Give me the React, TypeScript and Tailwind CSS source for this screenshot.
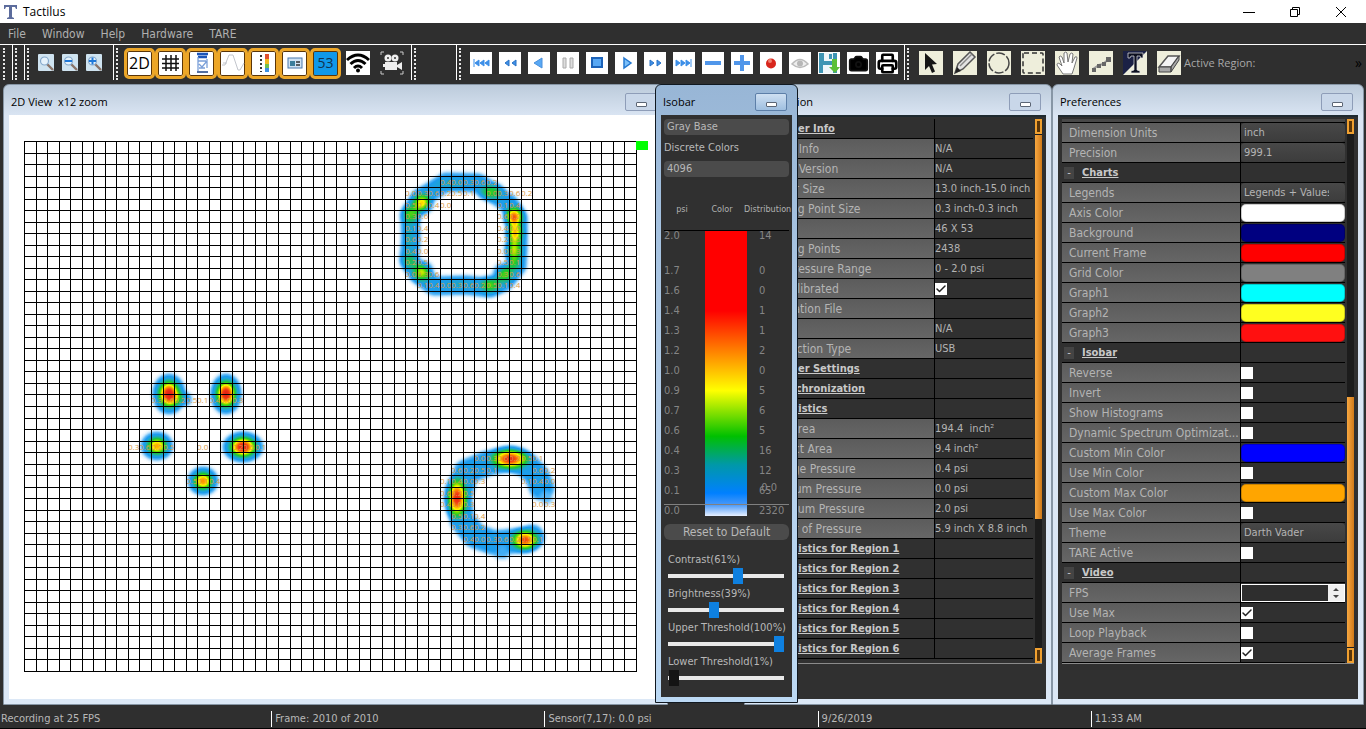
import React, { useState } from "react";
import clsx from "clsx";
import { Camera, Check, Printer } from "lucide-react";

const GRID_COLS = 53;
const GRID_ROWS = 46;
const GRID_W = 612;
const GRID_H = 530;

type InfoRow = { label: string; value?: string; heading?: boolean; checked?: boolean };

const infoRows: InfoRow[] = [
  { label: "Driver Info", heading: true },
  { label: "Driver Info", value: "N/A" },
  { label: "Driver Version", value: "N/A" },
  { label: "Sensor Size", value: "13.0 inch-15.0 inch" },
  { label: "Sensing Point Size", value: "0.3 inch-0.3 inch" },
  { label: "Size", value: "46 X 53" },
  { label: "Sensing Points", value: "2438" },
  { label: "Max Pressure Range", value: "0 - 2.0 psi" },
  { label: "Pre-Calibrated", checked: true },
  { label: "Calibration File" },
  { label: "", value: "N/A" },
  { label: "Connection Type", value: "USB" },
  { label: "Driver Settings", heading: true },
  { label: "Synchronization", heading: true },
  { label: "Statistics", heading: true },
  { label: "Total Area", value: "194.4  inch²" },
  { label: "Contact Area", value: "9.4 inch²" },
  { label: "Average Pressure", value: "0.4 psi" },
  { label: "Minimum Pressure", value: "0.0 psi" },
  { label: "Maximum Pressure", value: "2.0 psi" },
  { label: "Center of Pressure", value: "5.9 inch X 8.8 inch" },
  { label: "Statistics for Region 1", heading: true },
  { label: "Statistics for Region 2", heading: true },
  { label: "Statistics for Region 3", heading: true },
  { label: "Statistics for Region 4", heading: true },
  { label: "Statistics for Region 5", heading: true },
  { label: "Statistics for Region 6", heading: true },
];

type PrefRow = {
  label: string;
  kind: "heading" | "select" | "color" | "check" | "number";
  value?: string;
  checked?: boolean;
};

const prefRows: PrefRow[] = [
  { label: "Dimension Units", kind: "select", value: "inch" },
  { label: "Precision", kind: "select", value: "999.1" },
  { label: "Charts", kind: "heading" },
  { label: "Legends", kind: "select", value: "Legends + Values" },
  { label: "Axis Color", kind: "color", value: "bg-white" },
  { label: "Background", kind: "color", value: "bg-[#000080]" },
  { label: "Current Frame", kind: "color", value: "bg-[#ff0000]" },
  { label: "Grid Color", kind: "color", value: "bg-[#808080]" },
  { label: "Graph1", kind: "color", value: "bg-[#00ffff]" },
  { label: "Graph2", kind: "color", value: "bg-[#ffff20]" },
  { label: "Graph3", kind: "color", value: "bg-[#ff1010]" },
  { label: "Isobar", kind: "heading" },
  { label: "Reverse", kind: "check" },
  { label: "Invert", kind: "check" },
  { label: "Show Histograms", kind: "check" },
  { label: "Dynamic Spectrum Optimizat...", kind: "check" },
  { label: "Custom Min Color", kind: "color", value: "bg-[#0000ff]" },
  { label: "Use Min Color", kind: "check" },
  { label: "Custom Max Color", kind: "color", value: "bg-[#ffa500]" },
  { label: "Use Max Color", kind: "check" },
  { label: "Theme", kind: "select", value: "Darth Vader" },
  { label: "TARE Active", kind: "check" },
  { label: "Video", kind: "heading" },
  { label: "FPS", kind: "number" },
  { label: "Use Max", kind: "check", checked: true },
  { label: "Loop Playback", kind: "check" },
  { label: "Average Frames", kind: "check", checked: true },
];

const levels = [
  ["2.0", "14"],
  ["1.7", "0"],
  ["1.6", "0"],
  ["1.4", "1"],
  ["1.3", "1"],
  ["1.2", "2"],
  ["1.0", "0"],
  ["0.9", "5"],
  ["0.7", "6"],
  ["0.6", "5"],
  ["0.4", "16"],
  ["0.3", "12"],
  ["0.1", "65"],
  ["0.0", "2320"],
];

/* ---------- small controls ---------- */

function TickBox({ label, defaultChecked }: { label: string; defaultChecked?: boolean }) {
  const [on, setOn] = useState(!!defaultChecked);
  return (
    <span className="relative block w-3 h-3 bg-white">
      <input
        type="checkbox"
        aria-label={label}
        checked={on}
        onChange={() => setOn(!on)}
        className="block appearance-none w-3 h-3"
      />
      {on && (
        <Check className="absolute inset-0 w-3 h-3 text-[#222] pointer-events-none" strokeWidth={3} />
      )}
    </span>
  );
}

function MinimizeButton({ active }: { active?: boolean }) {
  return (
    <button
      type="button"
      aria-label="Minimize window"
      className={clsx(
        "w-8 h-[18px] shrink-0 rounded-[2px] border flex items-center justify-center",
        active
          ? "border-[#5d7fa8] bg-gradient-to-b from-[#cfe0f2] to-[#9fbfe0]"
          : "border-[#8e9db8] bg-[#c9d7e9]"
      )}
    >
      <span className="w-[11px] h-[5px] mt-1 rounded-[1px] border border-[#5c6675] bg-white" />
    </button>
  );
}

function SubWindow({
  title,
  active,
  className,
  children,
}: {
  title: string;
  active?: boolean;
  className?: string;
  children: React.ReactNode;
}) {
  return (
    <section
      className={clsx(
        "flex flex-col rounded-t-md border px-[5px] pb-[5px]",
        active
          ? "border-[#101820] bg-gradient-to-b from-[#98b6d6] via-[#b4cfeb] to-[#bcd9f4]"
          : "border-[#8796a5] bg-gradient-to-b from-[#bccbdb] from-0% via-[#dae5f3] via-5% to-[#dce8f6]",
        className
      )}
    >
      <header className="h-[30px] shrink-0 flex items-center justify-between pl-[2px] pr-[5px] pt-1">
        <h2 className="text-[11px] leading-4 text-black whitespace-pre">{title}</h2>
        <MinimizeButton active={active} />
      </header>
      {children}
    </section>
  );
}

function Handle() {
  return (
    <span className="flex h-full gap-[2px] shrink-0">
      <span className="w-px h-[35px] bg-white" />
      <span className="w-0 mt-[3px] h-[32px] border-l-2 border-dotted border-[#e6e6e6]" />
    </span>
  );
}

/* ---------- toolbar ---------- */

function Magnifier({ mark }: { mark?: "minus" | "plus" }) {
  return (
    <svg viewBox="0 0 18 18" className="w-[18px] h-[18px]">
      <rect x="1" width="16" height="17" rx="1" fill="#cfe3f0" />
      <path d="M10 10l6 6" stroke="#8a7468" strokeWidth="2.4" />
      <circle cx="7.5" cy="7" r="4" fill="#e6f2fb" stroke="#86a9cc" strokeWidth="1.2" />
      {mark && <path d="M4 7h7" stroke="#1f78d8" strokeWidth="2" />}
      {mark === "plus" && <path d="M7.5 3.500v7" stroke="#1f78d8" strokeWidth="2" />}
    </svg>
  );
}

const viewIcons: { name: string; text?: string; art?: React.ReactNode }[] = [
  { name: "2D view", text: "2D" },
  {
    name: "Grid",
    art: <path d="M7 4v16M12 4v16M17 4v16M3 8h17M3 12.500h17M3 17h17" stroke="#111" strokeWidth="1.500" fill="none" />,
  },
  {
    name: "Report",
    art: (
      <>
        <path d="M7 3h11M8 6h9" stroke="#1d55b8" strokeWidth="2.500" />
        <path d="M8 6v14M8 10h8M9 13l3 3 5-6M9 17h6M17 8v9" stroke="#7a9fd8" strokeWidth="1.300" fill="none" />
        <path d="M7 21h11" stroke="#1b3f80" strokeWidth="1.500" />
      </>
    ),
  },
  {
    name: "Wave",
    art: <path d="M1 14h3L8 4h4l5 15h2l4-7M2 12h4" stroke="#c2c5cc" fill="none" />,
  },
  {
    name: "Color scale",
    art: (
      <>
        <path d="M9 4v17" stroke="#333" strokeWidth="2" strokeDasharray="2 2" />
        <rect x="13" y="3" width="4" height="5" fill="#e05030" />
        <rect x="13" y="8" width="4" height="5" fill="#f0b820" />
        <rect x="13" y="13" width="4" height="4" fill="#70c050" />
        <rect x="13" y="17" width="4" height="4" fill="#3c90e0" />
      </>
    ),
  },
  {
    name: "Card",
    art: (
      <>
        <rect x="5" y="7" width="14" height="10" fill="#cfe2f4" stroke="#4b78ac" />
        <rect x="7" y="10" width="5" height="5" fill="#3b7d9c" />
        <path d="M13 11h4M13 14h4" stroke="#333" strokeWidth="1.500" />
      </>
    ),
  },
  { name: "Sensor count", text: "53" },
];

const playIcons: { name: string; art: React.ReactNode }[] = [
  { name: "First frame", art: <path d="M4 7v8M9 8l-4 3 4 3zM14 8l-4 3 4 3zM19 8l-4 3 4 3z" fill="#3d8fe8" stroke="#3d8fe8" /> },
  { name: "Rewind", art: <path d="M10 8l-4 3 4 3zM17 8l-4 3 4 3z" fill="#3d8fe8" stroke="#2b72c4" /> },
  { name: "Play backwards", art: <path d="M14 6l-8 5 8 5z" fill="#58a8f4" stroke="#4a90dc" /> },
  { name: "Pause", art: <path d="M6 6h3v10H6zM13 6h3v10h-3z" fill="#ddd" stroke="#aaa" /> },
  { name: "Stop", art: <path d="M6 6h10v9H6z" fill="#58a8f4" stroke="#1c62b8" strokeWidth="2" /> },
  { name: "Play", art: <path d="M9 6l7 5-7 5z" fill="#7cc0fa" stroke="#2478d0" strokeWidth="1.500" /> },
  { name: "Fast forward", art: <path d="M6 8l4 3-4 3zM13 8l4 3-4 3z" fill="#3d8fe8" stroke="#2b72c4" /> },
  { name: "Last frame", art: <path d="M3 8l4 3-4 3zM8 8l4 3-4 3zM13 8l4 3-4 3zM18 7v8" fill="#3d8fe8" stroke="#3d8fe8" /> },
  { name: "Remove", art: <path d="M3 11h16" stroke="#5096ea" strokeWidth="4" /> },
  { name: "Add", art: <path d="M3 11h16M11 3v16" stroke="#5096ea" strokeWidth="4" /> },
  {
    name: "Record",
    art: (
      <>
        <circle cx="11" cy="11.500" r="5" fill="#d8261c" />
        <circle cx="10" cy="9" r="2" fill="#f08070" />
      </>
    ),
  },
  {
    name: "Show",
    art: (
      <>
        <path d="M3 12q8-9 16 0q-8 7-16 0z" fill="#eee" stroke="#bbb" strokeWidth="1.500" />
        <circle cx="11" cy="11.500" r="3" fill="#b8b8b8" />
      </>
    ),
  },
  {
    name: "Save",
    art: (
      <>
        <path d="M1 1h18v20H1z" fill="#3f95b4" />
        <path d="M6 1h9v8H6zM5 13h10v8H5z" fill="#eef6fa" />
        <path d="M11 2h3v5h-3z" fill="#3f95b4" />
        <path d="M14 7h5v8h3l-5 6-6-6h3z" fill="#5cc038" />
      </>
    ),
  },
];

const toolIcons: { name: string; art: React.ReactNode }[] = [
  { name: "Select", art: <path d="M6 2l12 11-5 .500 3 7-3 1.500-3-7-4 4z" fill="#151515" /> },
  {
    name: "Pencil",
    art: (
      <>
        <path d="M2 22l3-9L17 1l5 5L10 18z" fill="#e2e2e2" stroke="#555" strokeWidth="1.500" />
        <path d="M7 15L19 3" stroke="#888" strokeWidth="1.500" />
        <path d="M2 22l2-6 4 4z" fill="#222" />
      </>
    ),
  },
  { name: "Ellipse region", art: <circle cx="12" cy="12" r="10" fill="none" stroke="#444" strokeWidth="1.500" strokeDasharray="9 2" /> },
  { name: "Rectangle region", art: <rect x="2" y="2" width="20" height="20" rx="1" fill="none" stroke="#333" strokeWidth="1.500" strokeDasharray="5 3" /> },
  {
    name: "Pan",
    art: (
      <path
        d="M8 23l-6-9q0-3 3-1l2 2-3-9q1-2 3 0l2 6V2q2-2 3 0l1 9 2-8q2-2 3 0l-1 9 3-6q2-1 2 1l-3 10-2 6z"
        fill="#fff"
        stroke="#777"
      />
    ),
  },
  {
    name: "Polyline",
    art: (
      <>
        <path d="M4 18l6-4 4-1 7-6" stroke="#999" strokeWidth="2" fill="none" />
        <path d="M3 17h4v4H3zM8 13h4v4H8zM13 11h4v4h-4zM17 6h5v5h-5z" fill="#666" />
      </>
    ),
  },
  {
    name: "Text",
    art: (
      <>
        <path d="M0 0h24L0 24z" fill="#1b2145" />
        <path d="M5 2h15v5h-2l-1-2h-3v14l3 1v2H8v-2l3-1V5H8L7 7H5z" fill="#0c0f20" stroke="#e8e8e8" strokeWidth=".7" />
      </>
    ),
  },
  {
    name: "Eraser",
    art: (
      <>
        <path d="M2 16L11 5h11l-8 11z" fill="#f4f4f4" stroke="#555" strokeWidth="1.500" />
        <path d="M2 16h12v5H2zM14 16l8-11v4l-8 12z" fill="#a8a8a8" stroke="#444" />
      </>
    ),
  },
];

function Toolbar() {
  return (
    <div className="h-[37px] shrink-0 border-t border-white bg-[#2f2f2f] flex overflow-hidden">
      <span className="w-0 ml-[3px] mt-[3px] h-[32px] border-l-2 border-dotted border-[#e6e6e6] mr-[7px]" />
      <Handle />
      <span className="w-[7px]" />
      <Handle />
      <div className="flex items-center gap-[6px] ml-2">
        <button type="button" aria-label="Zoom"><Magnifier /></button>
        <button type="button" aria-label="Zoom out"><Magnifier mark="minus" /></button>
        <button type="button" aria-label="Zoom in"><Magnifier mark="plus" /></button>
      </div>
      <span className="w-[10px]" />
      <Handle />
      <div className="flex items-center ml-[6px]">
        {viewIcons.map((icon) => (
          <button
            key={icon.name}
            type="button"
            aria-label={icon.name}
            className={clsx(
              "w-[31px] h-[31px] rounded-[5px] border-[3px] border-[#eca628] shadow-[inset_0_0_0_1px_#5a3508] flex items-center justify-center",
              icon.text === "53" ? "bg-[#1098e8] text-sm text-[#12324e]" : "bg-white text-base text-black"
            )}
          >
            {icon.text ?? <svg viewBox="0 0 24 24" className="w-6 h-6">{icon.art}</svg>}
          </button>
        ))}
      </div>
      <div className="flex items-center gap-[10px] ml-[5px]">
        <button type="button" aria-label="Wireless" className="bg-white">
          <svg viewBox="0 0 24 24" className="w-6 h-6" fill="none" stroke="#000" strokeWidth="3">
            <path d="M1 9q11-10 22 0M4.500 13q7.500-7 15 0M8 17q4-4 8 0" />
            <circle cx="12" cy="19.500" r="2" fill="#000" stroke="none" />
          </svg>
        </button>
        <button type="button" aria-label="Video camera">
          <svg viewBox="0 0 24 24" className="w-6 h-6">
            <path d="M1 4V1h3M20 1h3v3M23 20v3h-3M4 23H1v-3" stroke="#ccc" fill="none" />
            <circle cx="8" cy="7" r="3.500" fill="#eee" />
            <circle cx="15" cy="7" r="3.500" fill="#eee" />
            <path d="M5 11h12v8H5zM17 14l5-3v8l-5-3zM3 13h2v3H3z" fill="#eee" />
            <circle cx="8" cy="7" r="1" fill="#333" />
            <circle cx="15" cy="7" r="1" fill="#333" />
          </svg>
        </button>
      </div>
      <span className="w-[7px]" />
      <Handle />
      <span className="w-10" />
      <Handle />
      <div className="flex items-center gap-[7px] ml-[9px]">
        {playIcons.map((icon) => (
          <button key={icon.name} type="button" aria-label={icon.name} className="bg-white">
            <svg viewBox="0 0 22 22" className="w-[22px] h-[22px]">{icon.art}</svg>
          </button>
        ))}
        <button type="button" aria-label="Snapshot" className="bg-white w-[22px] h-[22px] flex items-center justify-center">
          <Camera className="w-[21px] h-[21px] text-white fill-black stroke-[#111]" strokeWidth={2} />
        </button>
        <button type="button" aria-label="Print" className="bg-white w-[22px] h-[22px] flex items-center justify-center text-black">
          <Printer className="w-[21px] h-[21px]" strokeWidth={3} />
        </button>
      </div>
      <span className="w-[6px]" />
      <Handle />
      <div className="flex items-center gap-[10px] ml-[10px]">
        {toolIcons.map((icon) => (
          <button key={icon.name} type="button" aria-label={icon.name} className="bg-[#eeeedb]">
            <svg viewBox="0 0 24 24" className="w-6 h-6">{icon.art}</svg>
          </button>
        ))}
      </div>
      <span className="self-center ml-[3px] text-[11px] text-[#a8a8a8]">Active Region:</span>
      <button type="button" aria-label="More tools" className="self-center ml-auto mr-1 text-sm text-black">
        »
      </button>
    </div>
  );
}

/* ---------- 2D view ---------- */

// pressure spots: centre, radii and peak strength
const hotSpots = [
  [422, 203, 12, 12, 0.75],
  [411, 214, 11, 12, 0.5],
  [514, 217, 11, 13, 0.95],
  [515, 233, 10, 14, 0.8],
  [514, 250, 10, 15, 0.65],
  [514, 264, 8, 10, 0.4],
  [422, 272, 12, 12, 0.65],
  [410, 261, 10, 11, 0.35],
  [409, 238, 6, 22, 0.2],
  [491, 192, 15, 10, 0.45],
  [504, 274, 12, 12, 0.5],
  [490, 285, 13, 10, 0.5],
  [450, 184, 22, 6, 0.15],
  [460, 284, 22, 6, 0.15],
  [510, 459, 24, 13, 1],
  [457, 498, 13, 25, 1],
  [525, 540, 17, 13, 0.95],
];

const contacts = [
  [169, 394, 16, 20, 1],
  [226, 394, 15, 20, 1],
  [157, 446, 16, 14, 0.82],
  [243, 447, 20, 15, 1],
  [203, 481, 15, 14, 0.85],
];

const ringPath =
  "M446 182L478 183L492 192L509 204L518 218L518 245L517 266L504 282L490 288L466 285L434 286L418 274L409 260L411 238L410 216L420 198L437 188Z";
const arcPath = "M542 488L537 476L527 465L510 459L488 463L466 472L459 498L462 520L475 536L495 543L525 540L532 537";

// cells that print a reading: column, row, how many in a run
const readingRuns = [
  [36, 3, 5], [33, 4, 6], [40, 4, 4], [33, 5, 4], [41, 5, 2], [33, 6, 2], [41, 6, 2], [33, 7, 2], [41, 7, 2],
  [33, 8, 2], [41, 8, 2], [33, 9, 2], [41, 9, 2], [33, 10, 2], [41, 10, 2], [33, 11, 3], [41, 11, 2], [34, 12, 9],
  [11, 22, 8], [9, 26, 4], [15, 26, 1], [18, 26, 3], [14, 29, 3], [39, 27, 6], [37, 28, 4],
  [44, 28, 2], [36, 29, 4], [43, 29, 3], [36, 30, 3], [36, 31, 3], [44, 31, 2], [37, 32, 3], [37, 33, 3], [38, 34, 7],
];

function PressureMap() {
  const xs = Array.from({ length: GRID_COLS + 1 }, (_, i) => Math.round((i * GRID_W) / GRID_COLS));
  const ys = Array.from({ length: GRID_ROWS + 1 }, (_, i) => Math.round((i * GRID_H) / GRID_ROWS));
  return (
    <svg className="block h-full w-full" role="img" aria-label="Pressure map">
      <defs>
        <radialGradient id="spot">
          <stop offset="0" stopColor="#fff" />
          <stop offset="0.3" stopColor="#fff" stopOpacity="0.85" />
          <stop offset="1" stopColor="#fff" stopOpacity="0" />
        </radialGradient>
        <radialGradient id="contact">
          <stop offset="0" stopColor="#fff" />
          <stop offset="0.25" stopColor="#fff" stopOpacity="0.95" />
          <stop offset="0.5" stopColor="#fff" stopOpacity="0.66" />
          <stop offset="0.72" stopColor="#fff" stopOpacity="0.36" />
          <stop offset="0.92" stopColor="#fff" stopOpacity="0.2" />
          <stop offset="1" stopColor="#fff" stopOpacity="0.08" />
        </radialGradient>
        <filter id="spectrum" filterUnits="userSpaceOnUse" x="24" y="141" width="614" height="531" colorInterpolationFilters="sRGB">
          <feGaussianBlur stdDeviation="2" />
          <feComponentTransfer>
            <feFuncR type="table" tableValues="1 0.400 0.110 0.110 0.120 0.100 0.420 1 1 0.950 0.850" />
            <feFuncG type="table" tableValues="1 0.740 0.610 0.640 0.700 0.780 0.860 0.950 0.600 0.220 0.080" />
            <feFuncB type="table" tableValues="1 0.970 0.940 0.840 0.550 0.200 0 0 0 0.080 0.080" />
          </feComponentTransfer>
        </filter>
      </defs>
      <g transform="translate(-9 -115)">
        <g filter="url(#spectrum)">
          <rect x="10" y="128" width="642" height="560" fill="#000" />
          <path d={ringPath} fill="none" stroke="#3a3a3a" strokeWidth="17" strokeLinejoin="round" />
          <path d={arcPath} fill="none" stroke="#383838" strokeWidth="23" strokeLinejoin="round" strokeLinecap="round" />
          <path d="M543 492l6 11" stroke="#1c1c1c" strokeWidth="10" />
          <path d="M502 545v13" stroke="#262626" strokeWidth="11" />
          <path d="M174 399h11" stroke="#383838" strokeWidth="12" strokeLinecap="round" />
          {contacts.map(([cx, cy, rx, ry, peak]) => (
            <ellipse key={`${cx}-${cy}`} cx={cx} cy={cy} rx={rx} ry={ry} fill="url(#contact)" opacity={peak} />
          ))}
          {hotSpots.map(([cx, cy, rx, ry, peak]) => (
            <ellipse key={`${cx}-${cy}`} cx={cx} cy={cy} rx={rx} ry={ry} fill="url(#spot)" opacity={peak} />
          ))}
        </g>
        <g fill="#d99a48" fontSize="8">
          {readingRuns.map(([col, row, n]) =>
            Array.from({ length: n }, (_, i) => (
              <text key={`${col + i}-${row}`} x={24 + xs[col + i]} y={150 + ys[row]}>
                {`0.${((col + i) * 3 + row * 5) % 7}`}
              </text>
            ))
          )}
        </g>
        <g stroke="#000" shapeRendering="crispEdges">
          {xs.map((x) => (
            <line key={x} x1={x + 24.5} x2={x + 24.5} y1={141} y2={672} />
          ))}
          {ys.map((y) => (
            <line key={y} x1={24} x2={637} y1={y + 141.5} y2={y + 141.5} />
          ))}
        </g>
        <rect x="636" y="141" width="12" height="9" fill="#00ff00" />
      </g>
    </svg>
  );
}

/* ---------- property tables ---------- */

function ScrollTrack({ low }: { low?: boolean }) {
  return (
    <div className="w-[7px] shrink-0 flex flex-col bg-[#1c1c1c]">
      <span className="h-[15px] shrink-0 border-2 border-[#f0a030] bg-[#5a3508]" />
      <span className={clsx("bg-gradient-to-r from-[#f8a840] to-[#d07a18]", low ? "mt-[263px] flex-1" : "mt-px h-[384px]")} />
      <span className={clsx("h-[15px] shrink-0 border-2 border-[#f0a030] bg-[#5a3508]", low ? "mt-px" : "mt-auto")} />
    </div>
  );
}

const table =
  "w-full table-fixed border-separate border-spacing-0 text-[11px] leading-4 text-[#b4b4b4] font-['DejaVu_Sans_Condensed',sans-serif]";
const labelCell = "h-5 p-0 border-b border-black border-r text-left font-normal";

function InformationTable() {
  return (
    <table className={table}>
      <colgroup>
        <col />
        <col className="w-[98px]" />
      </colgroup>
      <tbody>
        {infoRows.map((row, i) => (
          <tr key={i}>
            <th
              scope="row"
              className={clsx(
                labelCell,
                row.heading ? "pl-[25px] bg-[#303030] text-[#c8c8c8]" : "pl-3 bg-gradient-to-b from-[#5c5c5c] to-[#666]"
              )}
            >
              <span className={clsx("block truncate", row.heading ? "underline font-bold" : "text-xs leading-4")}>
                {row.label}
              </span>
            </th>
            <td className="h-5 p-0 border-b border-black bg-[#303030] whitespace-pre">
              {row.checked ? <TickBox label={row.label} defaultChecked /> : row.value}
            </td>
          </tr>
        ))}
      </tbody>
    </table>
  );
}

function PrefControl({ row }: { row: PrefRow }) {
  switch (row.kind) {
    case "select":
      return (
        <select
          aria-label={row.label}
          className="block appearance-none w-full h-[19px] pl-[3px] pr-4 rounded-[4px] bg-gradient-to-b from-[#484848] to-[#3c3c3c]"
        >
          <option>{row.value}</option>
        </select>
      );
    case "color":
      return <button type="button" aria-label={row.label} className={clsx("block w-full h-[18px] rounded-[5px] border border-black/20", row.value)} />;
    case "check":
      return <TickBox label={row.label} defaultChecked={row.checked} />;
    case "number":
      return (
        <span className="flex h-[18px] border border-white">
          <input type="text" aria-label={row.label} className="min-w-0 flex-1 bg-[#2e2e2e]" />
          <svg viewBox="0 0 16 16" className="w-4 h-4 bg-[#f0f0f0]">
            <path d="M8 3l3 3H5zM5 10h6l-3 3z" fill="#444" />
          </svg>
        </span>
      );
    default:
      return null;
  }
}

function PreferencesTable() {
  return (
    <table className={table}>
      <colgroup>
        <col />
        <col className="w-[104px]" />
      </colgroup>
      <tbody>
        {prefRows.map((row) => (
          <tr key={row.label}>
            <th
              scope="row"
              className={clsx(
                labelCell,
                row.kind === "heading" ? "pl-[2px] bg-[#303030]" : "pl-[7px] bg-gradient-to-b from-[#5c5c5c] to-[#666]"
              )}
            >
              {row.kind === "heading" ? (
                <span className="flex items-center gap-2 text-[#c8c8c8]">
                  <button type="button" aria-label={`Collapse ${row.label}`} className="w-[10px] h-3 bg-[#444] leading-3">
                    -
                  </button>
                  <span className="font-bold underline">{row.label}</span>
                </span>
              ) : (
                <span className="block whitespace-nowrap text-xs leading-4">{row.label}</span>
              )}
            </th>
            <td className="h-5 p-0 border-b border-black bg-[#303030]">
              <PrefControl row={row} />
            </td>
          </tr>
        ))}
      </tbody>
    </table>
  );
}

/* ---------- isobar ---------- */

function IsobarSlider({ name, value, dark }: { name: string; value: number; dark?: boolean }) {
  const [pct, setPct] = useState(value);
  return (
    <label className="block h-[34px] text-[11px] leading-4 text-[#b8b8b8] whitespace-nowrap">
      {name}({pct}%)
      <input
        type="range"
        value={pct}
        onChange={(e) => setPct(Number(e.target.value))}
        className={clsx(
          "block w-full h-4 appearance-none bg-transparent [&::-webkit-slider-runnable-track]:h-1 [&::-webkit-slider-runnable-track]:bg-[#e8e8e8] [&::-webkit-slider-thumb]:appearance-none [&::-webkit-slider-thumb]:-mt-[6px] [&::-webkit-slider-thumb]:h-4 [&::-webkit-slider-thumb]:w-[10px]",
          dark ? "[&::-webkit-slider-thumb]:bg-[#141414]" : "[&::-webkit-slider-thumb]:bg-[#0e80e0]"
        )}
      />
    </label>
  );
}

function IsobarWindow() {
  const select =
    "block appearance-none w-full h-4 px-[3px] rounded-[4px] bg-[#4b4b4b] text-[11px] leading-4 text-[#b8b8b8]";
  return (
    <SubWindow title="Isobar" active className="absolute left-[655px] top-[3px] bottom-[2px] w-[143px]">
      <div className="flex-1 min-h-0 bg-[#303030] px-[3px] pt-1 font-['DejaVu_Sans_Condensed',sans-serif]">
        <select aria-label="Color base" className={select}>
          <option>Gray Base</option>
        </select>
        <label className="block text-[11px] leading-[26px] text-[#b8b8b8]">
          Discrete Colors
          <select className={select}>
            <option>4096</option>
          </select>
        </label>
        <div className="mt-6 h-[29px] grid grid-cols-[36px_44px_1fr] text-[9px] leading-4 text-[#b0b0b0] text-center whitespace-nowrap">
          <span>psi</span>
          <span>Color</span>
          <span>Distribution</span>
        </div>
        <div className="relative h-[286px] flex border-t border-black text-[11px] leading-4 text-[#858585]">
          <div className="w-[41px]">
            {levels.map(([psi]) => (
              <div key={psi} className="h-5 first:h-[31px] first:-mt-[3px] first:mb-1">{psi}</div>
            ))}
          </div>
          <div className="w-[42px] bg-[linear-gradient(to_bottom,#ff0000_0%,#ff0000_28%,#ff8000_42%,#ffff00_56%,#00c000_72%,#0098a8_82%,#0080ff_92%,#4898f8_96%,#e8f0ff_100%)]" />
          <div className="pl-3">
            {levels.map(([psi, count]) => (
              <div key={psi} className="h-5 first:h-[31px] first:-mt-[3px] first:mb-1">{count}</div>
            ))}
          </div>
          <span className="absolute right-3 bottom-5">0.0</span>
          <span className="absolute inset-x-0 bottom-[11px] h-px bg-[#808080]" />
        </div>
        <button type="button" className="mt-2 block w-full h-4 rounded-[6px] bg-[#4b4b4b] text-xs leading-4 text-[#b8b8b8]">
          Reset to Default
        </button>
        <div className="mt-3 pl-1 pr-[5px]">
          <IsobarSlider name="Contrast" value={61} />
          <IsobarSlider name="Brightness" value={39} />
          <IsobarSlider name="Upper Threshold" value={100} />
          <IsobarSlider name="Lower Threshold" value={1} dark />
        </div>
      </div>
    </SubWindow>
  );
}

export default function App() {
  const status = ["Recording at 25 FPS", "Frame: 2010 of 2010", "Sensor(7,17): 0.0 psi", "9/26/2019", "11:33 AM"];

  return (
    <div className="h-screen flex flex-col bg-[#2f2f2f] overflow-hidden font-['Open_Sans',sans-serif]">
      {/* Title bar */}
      <header className="h-[23px] shrink-0 bg-white flex items-center pl-[3px] text-[11px] text-black">
        <svg viewBox="0 0 16 16" className="w-4 h-4 mr-1">
          <path d="M1 1h13v4h-1l-1-2H9v10l2 1v1H4v-1l2-1V3H3L2 5H1z" fill="#5c6c9c" />
        </svg>
        <h1 className="text-xs">Tactilus</h1>
        <div className="ml-auto flex items-center mr-[19px] gap-[34px]">
          <button type="button" aria-label="Minimize">
            <svg viewBox="0 0 12 12" className="w-3 h-3"><path d="M0 6.500h12" stroke="#000" /></svg>
          </button>
          <button type="button" aria-label="Restore">
            <svg viewBox="0 0 12 12" className="w-3 h-3" fill="none" stroke="#000">
              <path d="M1.500 3.500h7v7h-7zM3.500 3.500v-2h7v7h-2" />
            </svg>
          </button>
          <button type="button" aria-label="Close">
            <svg viewBox="0 0 12 12" className="w-3 h-3"><path d="M1 1l10 10M11 1L1 11" stroke="#000" /></svg>
          </button>
        </div>
      </header>

      {/* Menu */}
      <nav className="h-[21px] shrink-0 flex items-center gap-4 pl-2 text-xs text-[#b0b0b0] font-['DejaVu_Sans_Condensed',sans-serif]">
        {["File", "Window", "Help", "Hardware", "TARE"].map((item) => (
          <button key={item} type="button">{item}</button>
        ))}
      </nav>

      <Toolbar />

      {/* Windows */}
      <main className="relative flex-1 min-h-0 flex pt-[3px] pl-[3px] pr-[2px]">
        <SubWindow title="2D View  x12 zoom" className="flex-1 min-w-0 mr-[76px]">
          <div className="flex-1 min-h-0 bg-white overflow-hidden">
            <PressureMap />
          </div>
        </SubWindow>

        <SubWindow title="Information" className="w-[308px]">
          <div className="flex-1 min-h-0 bg-[#303030] border-t-2 border-[#1f2a30] flex flex-col pb-[35px] pt-[2px] pr-1">
            <div className="flex-1 min-h-0 flex border-b border-[#8a8a8a] overflow-hidden">
              <div className="flex-1 min-w-0 overflow-hidden mr-[2px]">
                <InformationTable />
              </div>
              <ScrollTrack />
            </div>
          </div>
        </SubWindow>

        <SubWindow title="Preferences" className="w-[312px]">
          <div className="flex-1 min-h-0 bg-[#303030] border-t-2 border-[#1f2a30] flex flex-col pb-[35px] pt-[2px] px-1">
            <div className="flex-1 min-h-0 flex border-b border-[#8a8a8a] overflow-hidden">
              <div className="flex-1 min-w-0 overflow-hidden mr-[2px]">
                <div className="h-1 border-b border-black bg-[#484848]" />
                <PreferencesTable />
              </div>
              <ScrollTrack low />
            </div>
          </div>
        </SubWindow>

        <IsobarWindow />
      </main>

      {/* Status bar */}
      <footer className="h-6 shrink-0 grid grid-cols-5 items-end pb-px text-[11px] leading-4 text-[#b8b8b8] border-b border-black font-['DejaVu_Sans_Condensed',sans-serif]">
        {status.map((text, i) => (
          <span key={text} className={clsx("h-4 pl-[3px] -ml-[2px]", i > 0 && "border-l border-white")}>
            {text}
          </span>
        ))}
      </footer>
    </div>
  );
}
